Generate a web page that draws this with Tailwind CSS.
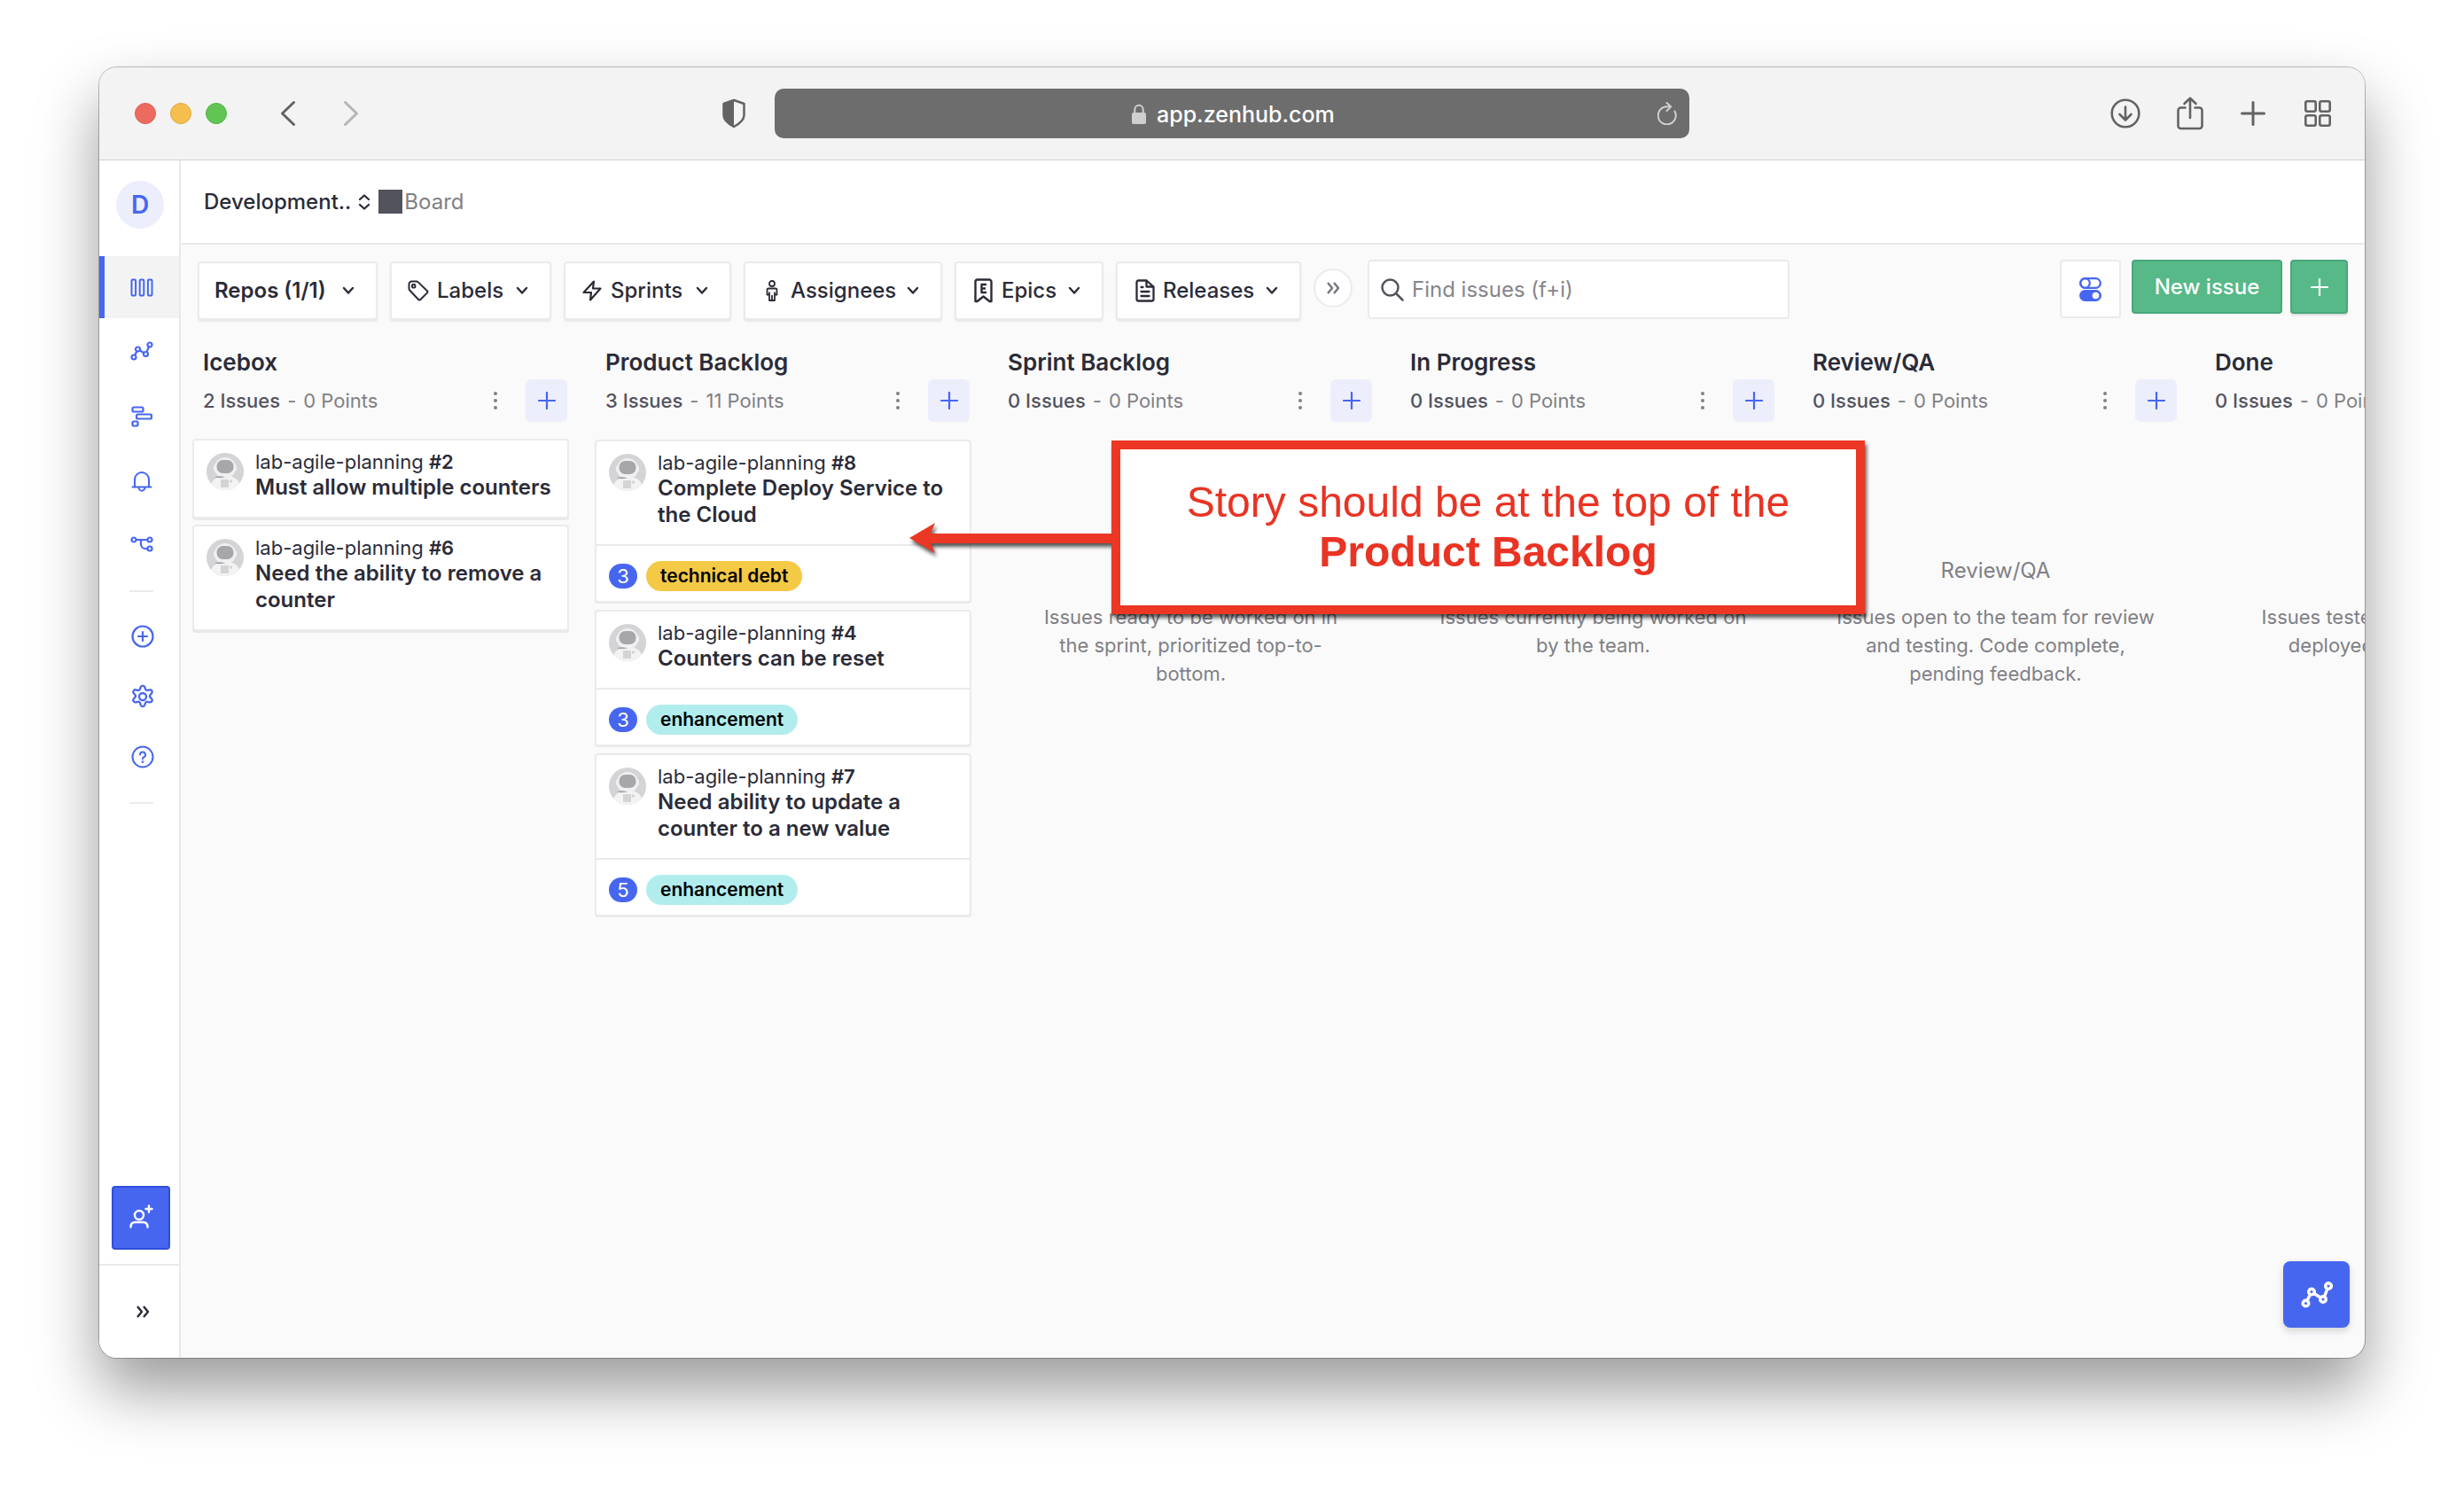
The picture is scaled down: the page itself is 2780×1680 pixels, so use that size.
<!DOCTYPE html>
<html lang="en">
<head>
<meta charset="utf-8">
<meta name="viewport" content="width=device-width, initial-scale=1">
<title>Board - Zenhub</title>
<script src="https://cdn.jsdelivr.net/npm/@tailwindcss/browser@4"></script>
</head>
<body class="flex min-h-screen bg-white px-28 pt-[76px] pb-[148px] font-['Inter',sans-serif] text-[#2b2b37]">

<svg class="hidden" aria-hidden="true">
  <symbol id="avatar" viewBox="0 0 42 42">
    <rect width="42" height="42" fill="#d4d4d6"/>
    <path d="M4 42c0-9 5-14 11-15h13c6 1 10 6 11 15z" fill="#f3f3f4"/>
    <rect x="8" y="13" width="26" height="8" rx="3" fill="#f0f0f1"/>
    <ellipse cx="21" cy="17" rx="12" ry="12" fill="#f0f0f1"/>
    <rect x="11.500" y="8" width="19" height="15" rx="7" fill="#a6a6ab"/>
    <path d="M9 27.500c3-1.500 6-1.500 12-.3-4 1.300-9 1.300-12 .3z" fill="#a6a6ab"/>
    <rect x="16" y="30" width="9" height="9" fill="#d4d4d6"/>
    <circle cx="27.500" cy="32" r="1.700" fill="#d4d4d6"/>
  </symbol>
  <symbol id="down" viewBox="0 0 14 10"><path d="M2 2l5 5.500L12 2" fill="none" stroke="currentColor" stroke-width="2.400" stroke-linecap="round" stroke-linejoin="round"/></symbol>
  <symbol id="add" viewBox="0 0 20 20"><path d="M10 1v18M1 10h18" fill="none" stroke="currentColor" stroke-width="2.200" stroke-linecap="round"/></symbol>
  <symbol id="dots" viewBox="0 0 6 20"><g fill="#808085"><circle cx="3" cy="2" r="2"/><circle cx="3" cy="10" r="2"/><circle cx="3" cy="18" r="2"/></g></symbol>
  <symbol id="raquo" viewBox="0 0 16 16"><path d="M2 2l5 6-5 6M9 2l5 6-5 6" fill="none" stroke="currentColor" stroke-width="2.400" stroke-linejoin="round"/></symbol>
  <symbol id="chart" viewBox="0 0 26 22"><g fill="none" stroke="currentColor" stroke-width="2.200"><circle cx="4" cy="18" r="2.500"/><circle cx="8.500" cy="9" r="2.500"/><circle cx="17.500" cy="14.500" r="2.500"/><circle cx="22" cy="4" r="2.500"/><path d="M5.200 15.700l2.200-4.400M10.700 10.300l4.600 2.900M18.500 12.200l2.500-6"/></g></symbol>
</svg>

<div class="flex min-w-0 flex-1 flex-col overflow-hidden rounded-[20px] bg-[#fafafa] shadow-[0_0_0_1px_rgba(0,0,0,0.25),0_36px_70px_rgba(0,0,0,0.4)]">

  <header class="grid h-[105px] shrink-0 grid-cols-[1fr_minmax(0,1032px)_1fr] items-center border-b border-[#d2d2d2] bg-[#f3f3f3] text-[#636363]">
    <div class="flex items-center pl-10">
      <span class="size-6 rounded-full border border-[#dd6055] bg-[#ed6a5e]"></span>
      <span class="ml-4 size-6 rounded-full border border-[#dfa845] bg-[#f5bf4f]"></span>
      <span class="ml-4 size-6 rounded-full border border-[#58b149] bg-[#61c554]"></span>
      <button aria-label="Back" class="ml-[60px]"><svg class="h-[30px] w-[18px]" viewBox="0 0 18 30" fill="none" stroke="#636363" stroke-width="3" stroke-linecap="round" stroke-linejoin="round"><path d="M15.500 2.500L2.500 15l13 12.500"/></svg></button>
      <button aria-label="Forward" class="ml-[53px]"><svg class="h-[30px] w-[18px]" viewBox="0 0 18 30" fill="none" stroke="#b5b5b5" stroke-width="3" stroke-linecap="round" stroke-linejoin="round"><path d="M2.500 2.500l13 12.500-13 12.500"/></svg></button>
      <button aria-label="Privacy report" class="mr-8 ml-auto"><svg class="h-[34px] w-7" viewBox="0 0 28 34"><path d="M14 2L25.500 6v13c0 6-6 10-11.500 13C8.500 29 2.500 25 2.500 19V6z" fill="#f3f3f3" stroke="#636363" stroke-width="2.500" stroke-linejoin="round"/><path d="M14 2L2.500 6v13c0 6 6 10 11.500 13z" fill="#636363"/></svg></button>
    </div>
    <div class="grid h-14 grid-cols-[1fr_auto_1fr] items-center rounded-[10px] bg-[#6d6d6d] px-[14px] text-white">
      <span></span>
      <div class="flex items-center gap-3 pt-0.5 pl-1">
        <svg class="h-6 w-4" viewBox="0 0 16 24" fill="#cfcfcf"><rect y="10" width="16" height="13" rx="2"/><path d="M3.300 11V6.500a4.700 4.700 0 019.400 0V11" fill="none" stroke="#cfcfcf" stroke-width="2"/></svg>
        <input aria-label="Address" value="app.zenhub.com" class="w-[202px] bg-transparent text-[25px] leading-8 font-medium outline-none">
      </div>
      <button aria-label="Reload" class="justify-self-end"><svg class="h-[26px] w-[22px]" viewBox="0 0 22 26" fill="none" stroke="#cfcfcf" stroke-width="2" stroke-linecap="round" stroke-linejoin="round"><path d="M19.500 10.500A10 10 0 1111 5.300h4M10.500 1l4.800 4.400-4.800 4.600"/></svg></button>
    </div>
    <div class="flex items-center justify-end pr-[37px]">
      <button aria-label="Downloads"><svg class="size-[34px]" viewBox="0 0 34 34" fill="none" stroke="currentColor" stroke-width="2.600" stroke-linecap="round" stroke-linejoin="round"><circle cx="17" cy="17" r="15.300"/><path d="M17 9.500V24M10.500 18l6.500 6.500 6.500-6.500"/></svg></button>
      <button aria-label="Share" class="ml-[41px]"><svg class="h-[38px] w-[30px]" viewBox="0 0 30 38" fill="none" stroke="currentColor" stroke-width="2.600" stroke-linecap="round" stroke-linejoin="round"><path d="M9.500 12.500H4.500a3 3 0 00-3 3V33a3 3 0 003 3h21a3 3 0 003-3V15.500a3 3 0 00-3-3h-5M15 24V2M8.500 8L15 1.800 21.500 8"/></svg></button>
      <button aria-label="New tab" class="ml-[42px]"><svg class="size-7" viewBox="0 0 28 28" fill="none" stroke="currentColor" stroke-width="3" stroke-linecap="round"><path d="M14 1.500v25M1.500 14h25"/></svg></button>
      <button aria-label="Tab overview" class="ml-[43px]"><svg class="size-8" viewBox="0 0 32 32" fill="none" stroke="currentColor" stroke-width="2.600"><rect x="2.300" y="2.300" width="11.400" height="11.400" rx="2"/><rect x="18.300" y="2.300" width="11.400" height="11.400" rx="2"/><rect x="2.300" y="18.300" width="11.400" height="11.400" rx="2"/><rect x="18.300" y="18.300" width="11.400" height="11.400" rx="2"/></svg></button>
    </div>
  </header>

  <div class="flex min-h-0 flex-1">
    <nav class="flex w-[92px] shrink-0 flex-col border-r-2 border-[#e9e9e9] bg-white pt-[23px] text-[#4766f0]">
      <a href="#" class="ml-[19px] flex size-[54px] items-center justify-center rounded-full bg-[#eceefc] text-[28px] font-semibold">D</a>
      <a href="#" aria-label="Board" class="mt-[31px] flex h-[70px] items-center justify-center border-l-[6px] border-[#4766f0] bg-[#f3f3f3]">
        <svg class="h-[21px] w-[26px]" viewBox="0 0 26 21" fill="none" stroke="currentColor" stroke-width="2"><rect x="1.500" y="1.500" width="4.600" height="18" rx="1.200"/><rect x="10.700" y="1.500" width="4.600" height="18" rx="1.200"/><rect x="19.900" y="1.500" width="4.600" height="18" rx="1.200"/></svg>
      </a>
      <a href="#" aria-label="Reports" class="flex h-[74px] items-center justify-center border-l-[6px] border-transparent"><svg class="h-[22px] w-[26px]"><use href="#chart"/></svg></a>
      <a href="#" aria-label="Roadmap" class="flex h-[73px] items-center justify-center border-l-[6px] border-transparent">
        <svg class="size-6" viewBox="0 0 24 24" fill="none" stroke="currentColor" stroke-width="2.200"><rect x="1.500" y="1.500" width="12" height="5" rx="1.500"/><rect x="6" y="9.500" width="17" height="5" rx="1.500"/><rect x="1.500" y="17.500" width="6" height="5" rx="1.500"/></svg>
      </a>
      <a href="#" aria-label="Notifications" class="flex h-[73px] items-center justify-center border-l-[6px] border-transparent">
        <svg class="size-6" viewBox="0 0 24 24" fill="none" stroke="currentColor" stroke-width="2" stroke-linecap="round"><path d="M1.500 18.500h21M4 18V10a8 8 0 0116 0v8M8.500 19a3.500 3.800 0 007 0"/></svg>
      </a>
      <a href="#" aria-label="Workflows" class="flex h-[70px] items-center justify-center border-l-[6px] border-transparent">
        <svg class="h-[18px] w-[26px]" viewBox="0 0 26 18" fill="none" stroke="currentColor" stroke-width="2.200"><circle cx="4" cy="4" r="2.500"/><circle cx="22" cy="4" r="2.500"/><circle cx="22" cy="14" r="2.500"/><path d="M6.500 4h13M12 4v5a5 5 0 005 5h2.500"/></svg>
      </a>
      <hr class="mt-[17px] ml-[34px] w-[27px] border-t-2 border-[#ebebeb]">
      <a href="#" aria-label="Create" class="mt-4 flex h-[68px] items-center justify-center border-l-[8px] border-transparent">
        <svg class="size-[26px]" viewBox="0 0 26 26" fill="none" stroke="currentColor" stroke-width="2.200" stroke-linecap="round"><circle cx="13" cy="13" r="11.500"/><path d="M13 8v10M8 13h10"/></svg>
      </a>
      <a href="#" aria-label="Settings" class="flex h-[68px] items-center justify-center border-l-[8px] border-transparent">
        <svg class="size-7" viewBox="0 0 28 28" fill="none" stroke="currentColor" stroke-width="2.300" stroke-linejoin="round"><circle cx="14" cy="14" r="4"/><path d="M11.600 3.400c.7-2.400 4.100-2.400 4.800 0l.5 1.800c.4 1.200 1.600 1.900 2.800 1.600l1.900-.5c2.400-.6 4.100 2.300 2.400 4.100l-1.300 1.300c-.9.900-.9 2.300 0 3.200l1.300 1.300c1.700 1.800 0 4.700-2.400 4.100l-1.900-.5c-1.200-.3-2.400.4-2.800 1.600l-.5 1.800c-.7 2.400-4.100 2.400-4.800 0l-.5-1.800c-.4-1.200-1.600-1.900-2.800-1.600l-1.900.5c-2.400.6-4.100-2.300-2.400-4.100l1.300-1.300c.9-.9.900-2.300 0-3.200L4 10.400C2.300 8.600 4 5.700 6.400 6.300l1.900.5c1.200.3 2.400-.4 2.800-1.600z"/></svg>
      </a>
      <a href="#" aria-label="Help" class="flex h-[68px] items-center justify-center border-l-[8px] border-transparent">
        <svg class="size-[26px]" viewBox="0 0 26 26" fill="none" stroke="currentColor" stroke-width="2" stroke-linecap="round"><circle cx="13" cy="13" r="11.500"/><path d="M10 10.500a3 3 0 113.900 2.900c-.6.200-.9.600-.9 1.200v.6"/><circle cx="13" cy="18.500" r=".5"/></svg>
      </a>
      <hr class="mt-[17px] ml-[34px] w-[27px] border-t-2 border-[#ebebeb]">
      <button aria-label="Invite people" class="mt-auto mb-4 ml-[14px] flex h-[72px] w-[66px] items-center justify-center rounded border-2 border-[#2f4fdc] bg-[#4766f0] pb-1 text-white">
        <svg class="size-7" viewBox="0 0 28 28" fill="none" stroke="currentColor" stroke-width="2.400" stroke-linecap="round"><circle cx="12" cy="13" r="5"/><path d="M2.500 26.500c0-4 2-5.500 5-5.500h9c3 0 5 1.500 5 5.500M23 2.500v7M19.500 6h7"/></svg>
      </button>
      <button aria-label="Expand sidebar" class="flex h-[106px] items-center justify-center border-t-2 border-[#e9e9e9] pl-2 text-[#2b2b37]"><svg class="size-4"><use href="#raquo"/></svg></button>
    </nav>

    <main class="relative flex min-w-0 flex-1 flex-col overflow-hidden">
      <div class="flex h-[95px] shrink-0 items-center border-b-2 border-[#e9e9e9] bg-white pl-[26px] text-2xl">
        <button class="flex items-center gap-2 font-medium">Development..
          <svg class="h-[18px] w-[14px]" viewBox="0 0 14 18" fill="none" stroke="currentColor" stroke-width="2.300" stroke-linecap="round" stroke-linejoin="round"><path d="M2 6l5-4.500L12 6M2 12l5 4.500 5-4.500"/></svg>
        </button>
        <span class="ml-[9px] size-[27px] bg-[#53535e]"></span>
        <span class="ml-[2px] text-[#808085]">Board</span>
      </div>

      <div class="flex shrink-0 items-start pt-[17px] pr-[19px] pl-[19px] text-2xl font-medium">
        <div class="mt-0.5 flex gap-[14px]">
          <button class="flex h-[66px] w-[203px] items-center justify-between rounded border-2 border-[#ebebeb] bg-white pr-6 pl-[17px] font-semibold shadow-[0_2px_2px_#e8e8e8]">Repos (1/1)<svg class="h-[10px] w-[14px]"><use href="#down"/></svg></button>
          <button class="flex h-[66px] w-[182px] items-center gap-[9px] rounded border-2 border-[#ebebeb] bg-white pr-6 pl-[18px] shadow-[0_2px_2px_#e8e8e8]"><svg class="size-6" viewBox="0 0 24 24" fill="none" stroke="currentColor" stroke-width="2" stroke-linejoin="round"><path d="M1.500 4.500a3 3 0 013-3h5.200a3 3 0 012.100.9L22 12.200a1.500 1.500 0 010 2.200l-7.600 7.600a1.500 1.500 0 01-2.200 0L2.400 11.800a3 3 0 01-.9-2.100z"/><rect x="5" y="5" width="3.400" height="3.400" rx="1"/></svg>Labels<svg class="ml-auto h-[10px] w-[14px]"><use href="#down"/></svg></button>
          <button class="flex h-[66px] w-[189px] items-center gap-[9px] rounded border-2 border-[#ebebeb] bg-white pr-6 pl-[18px] shadow-[0_2px_2px_#e8e8e8]"><svg class="size-6" viewBox="0 0 24 24" fill="none" stroke="currentColor" stroke-width="2.200" stroke-linejoin="round"><path d="M14 1.500L2.500 14H11l-1 8.500L21.500 9.500H13z"/></svg>Sprints<svg class="ml-auto h-[10px] w-[14px]"><use href="#down"/></svg></button>
          <button class="flex h-[66px] w-[224px] items-center gap-[9px] rounded border-2 border-[#ebebeb] bg-white pr-6 pl-[18px] shadow-[0_2px_2px_#e8e8e8]"><svg class="size-6" viewBox="0 0 24 24" fill="none" stroke="currentColor" stroke-width="1.800" stroke-linejoin="round"><circle cx="12" cy="4" r="3"/><path d="M8 9.500h8a1.500 1.500 0 011.500 1.500v5.500H15V23H9v-6.500H6.500V11A1.500 1.500 0 018 9.500zM9 13.500v3M15 13.500v3M12 17v6"/></svg>Assignees<svg class="ml-auto h-[10px] w-[14px]"><use href="#down"/></svg></button>
          <button class="flex h-[66px] w-[168px] items-center gap-[9px] rounded border-2 border-[#ebebeb] bg-white pr-6 pl-[18px] shadow-[0_2px_2px_#e8e8e8]"><svg class="h-7 w-6" viewBox="0 0 24 28" fill="none" stroke="currentColor" stroke-width="2.400" stroke-linejoin="round"><path d="M3.500 26V4A2.500 2.500 0 016 1.500h13A2.500 2.500 0 0121.500 4v22h-2l-7-5.500-7 5.500z"/><path d="M16 7h-5.500v9H16M10.500 11.500H15"/></svg>Epics<svg class="ml-auto h-[10px] w-[14px]"><use href="#down"/></svg></button>
          <button class="flex h-[66px] w-[209px] items-center gap-[9px] rounded border-2 border-[#ebebeb] bg-white pr-6 pl-[18px] shadow-[0_2px_2px_#e8e8e8]"><svg class="h-[26px] w-6" viewBox="0 0 24 26" fill="none" stroke="currentColor" stroke-width="2.300" stroke-linejoin="round" stroke-linecap="round"><path d="M14.500 1.500h-9a2 2 0 00-2 2v19a2 2 0 002 2h15a2 2 0 002-2V8.500zM14.500 1.500v7h8M8.500 9h2M8.500 14h9M8.500 19h9"/></svg>Releases<svg class="ml-auto h-[10px] w-[14px]"><use href="#down"/></svg></button>
        </div>
        <button aria-label="More filters" class="mt-[10px] ml-[14px] flex size-11 items-center justify-center rounded-full border-2 border-[#ebebeb] bg-white text-[#74747c]"><svg class="size-4"><use href="#raquo"/></svg></button>
        <label class="ml-[17px] flex h-[67px] w-[476px] items-center gap-[9px] rounded border-2 border-[#ebebeb] bg-white pl-[13px]">
          <svg class="size-[26px]" viewBox="0 0 26 26" fill="none" stroke="#53535e" stroke-width="2.500" stroke-linecap="round"><circle cx="10.500" cy="10.500" r="9"/><path d="M17 17l7.500 7.500"/></svg>
          <input type="search" aria-label="Find issues" placeholder="Find issues (f+i)" class="min-w-0 flex-1 bg-transparent font-normal outline-none placeholder:text-[#85858a]">
        </label>
        <button aria-label="Display settings" class="ml-auto flex h-[66px] w-[69px] items-center justify-center rounded border-2 border-[#ebebeb] bg-white text-[#4766f0]">
          <svg class="h-[27px] w-[25px]" viewBox="0 0 25 27"><rect x="1.200" y="1.200" width="22.600" height="10.600" rx="5.300" fill="none" stroke="currentColor" stroke-width="2.200"/><circle cx="6.500" cy="6.500" r="5.300" fill="none" stroke="currentColor" stroke-width="2.200"/><rect y="14" width="25" height="13" rx="6.500" fill="currentColor"/><circle cx="18.500" cy="20.500" r="3.800" fill="#fff"/></svg>
        </button>
        <button class="ml-3 h-[61px] w-[170px] rounded border-2 border-[#48a87c] bg-[#57b988] text-white">New issue</button>
        <button aria-label="Create" class="ml-[9px] flex h-[61px] w-[65px] items-center justify-center rounded border-2 border-[#48a87c] bg-[#57b988] text-white shadow-[0_2px_2px_#dcdcdc]"><svg class="size-5"><use href="#add"/></svg></button>
      </div>

      <div class="flex min-h-0 flex-1 gap-[29px] pt-8 pl-[13px] text-[22px]">

        <section class="w-[425px] shrink-0">
          <h2 class="pl-3 text-[26px] leading-8 font-semibold">Icebox</h2>
          <div class="mt-[3px] flex h-12 items-center pr-0.5 pl-3">
            <p class="flex gap-2 text-[#808085]"><span class="font-medium text-[#53535e]">2 Issues</span><span>-</span><span>0 Points</span></p>
            <button aria-label="Icebox menu" class="ml-auto"><svg class="h-5 w-1.5"><use href="#dots"/></svg></button>
            <button aria-label="Add issue to Icebox" class="ml-[31px] flex h-12 w-[47px] items-center justify-center rounded-md bg-[#eceefc] text-[#4766f0]"><svg class="size-5"><use href="#add"/></svg></button>
          </div>
          <div class="mt-[19px] flex flex-col gap-[7px]">
            <article class="rounded border-2 border-[#ebebeb] bg-white shadow-[0_2px_0_#e9e9e9]">
              <div class="flex gap-[13px] px-[14px] pt-[10px] pb-[18px]"><svg class="mt-1 size-[42px] shrink-0 rounded-full"><use href="#avatar"/></svg>
                <div><p class="leading-7">lab-agile-planning <span class="font-semibold">#2</span></p><h3 class="text-2xl leading-[30px] font-semibold">Must allow multiple counters</h3></div></div>
            </article>
            <article class="rounded border-2 border-[#ebebeb] bg-white shadow-[0_2px_0_#e9e9e9]">
              <div class="flex gap-[13px] px-[14px] pt-[10px] pb-[18px]"><svg class="mt-1 size-[42px] shrink-0 rounded-full"><use href="#avatar"/></svg>
                <div><p class="leading-7">lab-agile-planning <span class="font-semibold">#6</span></p><h3 class="text-2xl leading-[30px] font-semibold">Need the ability to remove a counter</h3></div></div>
            </article>
          </div>
        </section>

        <section class="w-[425px] shrink-0">
          <h2 class="pl-3 text-[26px] leading-8 font-semibold">Product Backlog</h2>
          <div class="mt-[3px] flex h-12 items-center pr-0.5 pl-3">
            <p class="flex gap-2 text-[#808085]"><span class="font-medium text-[#53535e]">3 Issues</span><span>-</span><span>11 Points</span></p>
            <button aria-label="Product Backlog menu" class="ml-auto"><svg class="h-5 w-1.5"><use href="#dots"/></svg></button>
            <button aria-label="Add issue to Product Backlog" class="ml-[31px] flex h-12 w-[47px] items-center justify-center rounded-md bg-[#eceefc] text-[#4766f0]"><svg class="size-5"><use href="#add"/></svg></button>
          </div>
          <div class="mt-5 flex flex-col gap-2">
            <article class="rounded border-2 border-[#ebebeb] bg-white shadow-[0_1px_0_#e9e9e9]">
              <div class="flex gap-[13px] px-[14px] pt-[10px] pb-[18px]"><svg class="mt-1 size-[42px] shrink-0 rounded-full"><use href="#avatar"/></svg>
                <div><p class="leading-7">lab-agile-planning <span class="font-semibold">#8</span></p><h3 class="text-2xl leading-[30px] font-semibold">Complete Deploy Service to the Cloud</h3></div></div>
              <div class="flex items-center gap-[10px] border-t-2 border-[#ebebeb] px-[14px] pt-[17px] pb-[11px]">
                <span class="flex h-7 w-8 items-center justify-center rounded-full bg-[#4766f0] text-white">3</span>
                <span class="rounded-full bg-[#f4c945] px-4 text-[21px] leading-[34px] font-semibold text-black">technical debt</span>
              </div>
            </article>
            <article class="rounded border-2 border-[#ebebeb] bg-white shadow-[0_1px_0_#e9e9e9]">
              <div class="flex gap-[13px] px-[14px] pt-[10px] pb-[18px]"><svg class="mt-1 size-[42px] shrink-0 rounded-full"><use href="#avatar"/></svg>
                <div><p class="leading-7">lab-agile-planning <span class="font-semibold">#4</span></p><h3 class="text-2xl leading-[30px] font-semibold">Counters can be reset</h3></div></div>
              <div class="flex items-center gap-[10px] border-t-2 border-[#ebebeb] px-[14px] pt-[17px] pb-[11px]">
                <span class="flex h-7 w-8 items-center justify-center rounded-full bg-[#4766f0] text-white">3</span>
                <span class="rounded-full bg-[#b2edee] px-4 text-[21px] leading-[34px] font-semibold text-black">enhancement</span>
              </div>
            </article>
            <article class="rounded border-2 border-[#ebebeb] bg-white shadow-[0_1px_0_#e9e9e9]">
              <div class="flex gap-[13px] px-[14px] pt-[10px] pb-[18px]"><svg class="mt-1 size-[42px] shrink-0 rounded-full"><use href="#avatar"/></svg>
                <div><p class="leading-7">lab-agile-planning <span class="font-semibold">#7</span></p><h3 class="text-2xl leading-[30px] font-semibold">Need ability to update a counter to a new value</h3></div></div>
              <div class="flex items-center gap-[10px] border-t-2 border-[#ebebeb] px-[14px] pt-[17px] pb-[11px]">
                <span class="flex h-7 w-8 items-center justify-center rounded-full bg-[#4766f0] text-white">5</span>
                <span class="rounded-full bg-[#b2edee] px-4 text-[21px] leading-[34px] font-semibold text-black">enhancement</span>
              </div>
            </article>
          </div>
        </section>

        <section class="w-[425px] shrink-0">
          <h2 class="pl-3 text-[26px] leading-8 font-semibold">Sprint Backlog</h2>
          <div class="mt-[3px] flex h-12 items-center pr-0.5 pl-3">
            <p class="flex gap-2 text-[#808085]"><span class="font-medium text-[#53535e]">0 Issues</span><span>-</span><span>0 Points</span></p>
            <button aria-label="Sprint Backlog menu" class="ml-auto"><svg class="h-5 w-1.5"><use href="#dots"/></svg></button>
            <button aria-label="Add issue to Sprint Backlog" class="ml-[31px] flex h-12 w-[47px] items-center justify-center rounded-md bg-[#eceefc] text-[#4766f0]"><svg class="size-5"><use href="#add"/></svg></button>
          </div>
          <div class="mt-[204px] flex flex-col items-center pl-3 text-center text-[#808085]">
            <p class="max-w-[370px] leading-8">Issues ready to be worked on in the sprint, prioritized top-to-bottom.</p>
          </div>
        </section>

        <section class="w-[425px] shrink-0">
          <h2 class="pl-3 text-[26px] leading-8 font-semibold">In Progress</h2>
          <div class="mt-[3px] flex h-12 items-center pr-0.5 pl-3">
            <p class="flex gap-2 text-[#808085]"><span class="font-medium text-[#53535e]">0 Issues</span><span>-</span><span>0 Points</span></p>
            <button aria-label="In Progress menu" class="ml-auto"><svg class="h-5 w-1.5"><use href="#dots"/></svg></button>
            <button aria-label="Add issue to In Progress" class="ml-[31px] flex h-12 w-[47px] items-center justify-center rounded-md bg-[#eceefc] text-[#4766f0]"><svg class="size-5"><use href="#add"/></svg></button>
          </div>
          <div class="mt-[204px] flex flex-col items-center pl-3 text-center text-[#808085]">
            <p class="max-w-[370px] leading-8">Issues currently being worked on by the team.</p>
          </div>
        </section>

        <section class="w-[425px] shrink-0">
          <h2 class="pl-3 text-[26px] leading-8 font-semibold">Review/QA</h2>
          <div class="mt-[3px] flex h-12 items-center pr-0.5 pl-3">
            <p class="flex gap-2 text-[#808085]"><span class="font-medium text-[#53535e]">0 Issues</span><span>-</span><span>0 Points</span></p>
            <button aria-label="Review/QA menu" class="ml-auto"><svg class="h-5 w-1.5"><use href="#dots"/></svg></button>
            <button aria-label="Add issue to Review/QA" class="ml-[31px] flex h-12 w-[47px] items-center justify-center rounded-md bg-[#eceefc] text-[#4766f0]"><svg class="size-5"><use href="#add"/></svg></button>
          </div>
          <div class="mt-[152px] flex flex-col items-center pl-3 text-center text-[#808085]">
            <h3 class="text-2xl leading-8">Review/QA</h3>
            <p class="mt-5 max-w-[370px] leading-8">Issues open to the team for review and testing. Code complete, pending feedback.</p>
          </div>
        </section>

        <section class="w-[425px] shrink-0">
          <h2 class="pl-3 text-[26px] leading-8 font-semibold">Done</h2>
          <div class="mt-[3px] flex h-12 items-center pr-0.5 pl-3">
            <p class="flex gap-2 text-[#808085]"><span class="font-medium text-[#53535e]">0 Issues</span><span>-</span><span>0 Points</span></p>
          </div>
          <div class="mt-[204px] flex flex-col items-center pl-3 text-center text-[#808085]">
            <p class="max-w-[370px] leading-8">Issues tested, confirmed, and deployed to production.</p>
          </div>
        </section>
      </div>

      <!-- Callout laid over the board, pointing at the first backlog story -->
      <aside class="absolute top-[316px] left-[821px] flex items-center drop-shadow-[2px_4px_2px_rgba(0,0,0,0.65)]">
        <svg class="mt-6 h-[36px] w-[229px]" viewBox="0 0 229 36" fill="#eb3724"><path d="M1 18L30 1l-5 12h204v11H25l5 11z"/></svg>
        <p class="flex h-[196px] w-[850px] flex-col justify-center border-[10px] border-[#eb3724] bg-white text-center font-['Liberation_Sans',sans-serif] text-5xl leading-[56px] text-[#e93323]">Story should be at the top of the <strong class="font-bold">Product Backlog</strong></p>
      </aside>

      <button aria-label="Open reports" class="absolute right-[17px] bottom-[34px] flex size-[75px] items-center justify-center rounded-lg bg-[#4766f0] text-white shadow-[0_4px_8px_rgba(0,0,0,0.15)]"><svg class="h-[30px] w-[36px]" viewBox="0 0 36 30" fill="none" stroke="currentColor" stroke-width="3.500"><circle cx="5.500" cy="24.500" r="3.300"/><circle cx="12" cy="11.500" r="3.300"/><circle cx="25" cy="20" r="3.300"/><circle cx="31" cy="5" r="3.300"/><path d="M7 21.500l3.500-7M15 13.500l7 4.500M26.500 17l3.200-8.500"/></svg></button>
    </main>
  </div>
</div>
</body>
</html>
